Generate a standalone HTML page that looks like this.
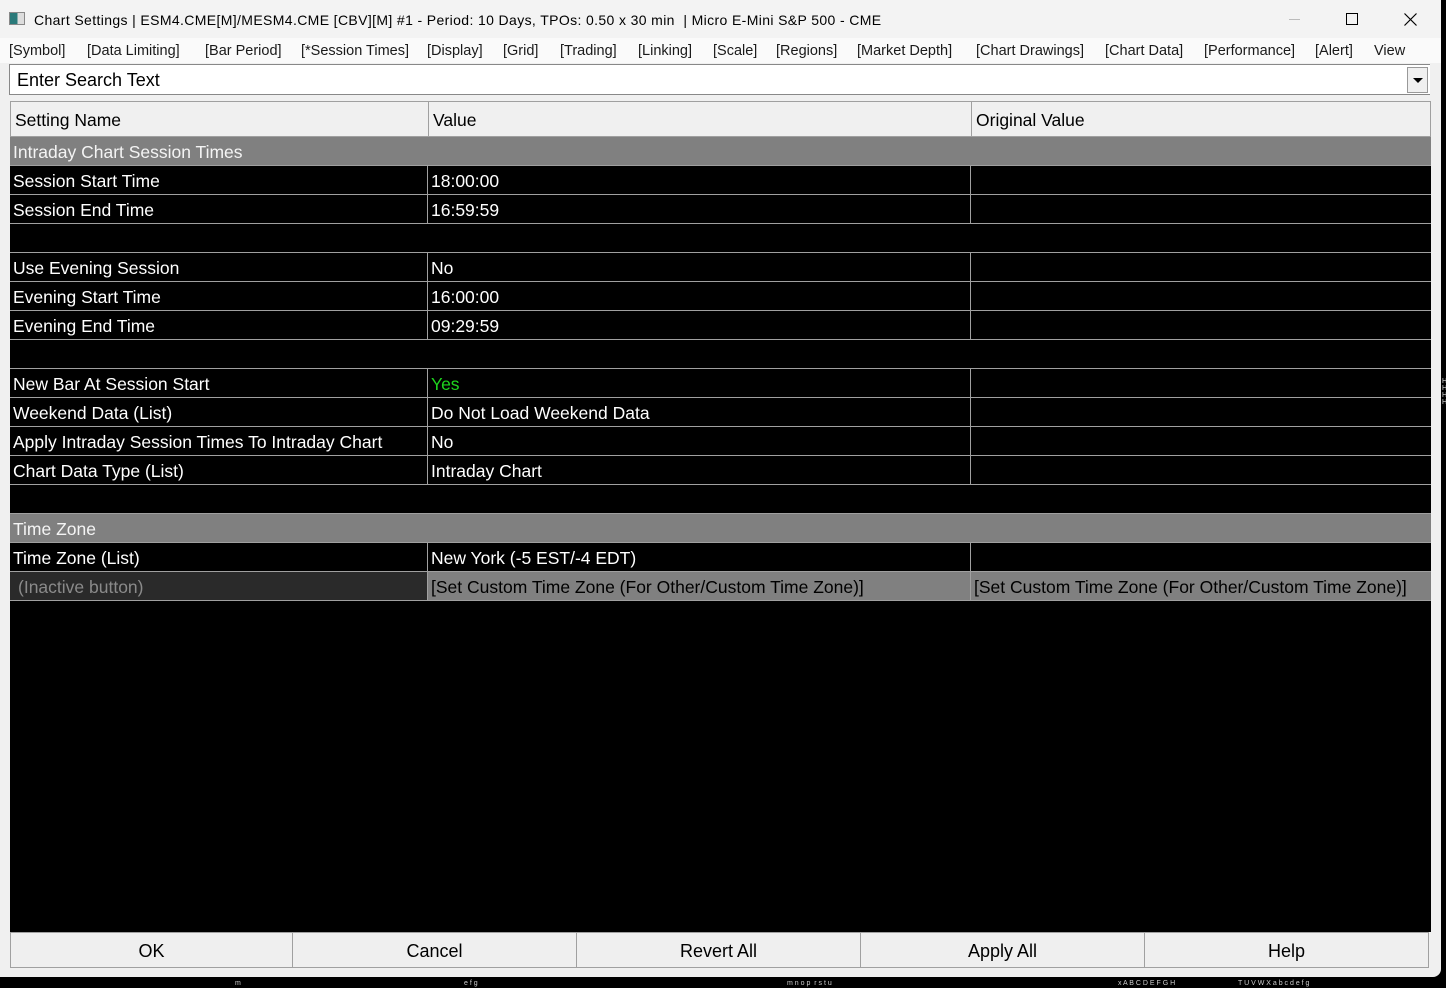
<!DOCTYPE html>
<html><head><meta charset="utf-8"><style>
*{margin:0;padding:0;box-sizing:border-box}
body{width:1446px;height:988px;background:#000;position:relative;overflow:hidden;font-family:"Liberation Sans",sans-serif}
.win{position:absolute;left:0;top:0;width:1441px;height:977px;background:#f0f0f0;border-radius:0 8px 8px 0}
.title{position:absolute;left:0;top:0;width:1441px;height:38px;background:#f3f3f3;font-size:14px;color:#000}
.menu{position:absolute;left:0;top:38px;width:1441px;height:25px;background:#fafafa;font-size:14.5px;color:#1a1a1a}
.menu span{position:absolute;top:5px;white-space:nowrap}
.search{position:absolute;left:9px;top:64px;width:1421px;height:31px;background:#fff;border:1px solid #888;border-right:none;font-size:18px;padding:5px 7px}
.dd{position:absolute;left:1407px;top:67px;width:21px;height:26px;background:#f0f0f0;border:1px solid #999}
.grid{position:absolute;left:10px;top:101px;width:1421px;height:831px;background:#000}
.r{position:absolute;left:10px;width:1421px;height:29px;font-size:17.5px;color:#fff;border-bottom:1px solid #a0a0a0}
.r div{position:absolute;top:0;height:28px;line-height:30px;padding-left:3px;white-space:nowrap}
.c1{left:0;width:417px}.c2{left:417px;width:543px;border-left:1px solid #a0a0a0}.c3{left:960px;width:461px;border-left:1px solid #a0a0a0}
.hdr{background:#f0f0f0;color:#000;height:36px;top:101px;border:1px solid #a0a0a0}
.hdr div{height:35px;line-height:36px;padding-left:4px}
.grp{background:#808080;color:#f4f4f4}
.btn{position:absolute;top:932px;height:36px;background:#efefef;border:1px solid #a0a0a0;font-size:18px;text-align:center;line-height:37px;color:#000}
</style></head><body>
<div class="win">
<div class="title">
<div style="position:absolute;left:9px;top:12px;width:16px;height:13px;border:1px solid #888;background:linear-gradient(90deg,#2a7a7a 0 55%,#ddd 55% 100%)"></div>
<div style="position:absolute;left:34px;top:12px;white-space:nowrap;letter-spacing:0.37px">Chart Settings | ESM4.CME[M]/MESM4.CME [CBV][M] #1 - Period: 10 Days, TPOs: 0.50 x 30 min &nbsp;| Micro E-Mini S&amp;P 500 - CME</div>
<div style="position:absolute;left:1289px;top:19px;width:11px;height:1px;background:#bbb"></div>
<div style="position:absolute;left:1346px;top:13px;width:12px;height:12px;border:1.3px solid #000"></div>
<svg style="position:absolute;left:1404px;top:13px" width="13" height="13"><path d="M0.5 0.5L12.5 12.5M12.5 0.5L0.5 12.5" stroke="#000" stroke-width="1.2"/></svg>
</div>
<div class="menu">
<span style="left:9px">[Symbol]</span><span style="left:87px">[Data Limiting]</span><span style="left:205px">[Bar Period]</span><span style="left:301px">[*Session Times]</span><span style="left:427px">[Display]</span><span style="left:503px">[Grid]</span><span style="left:560px">[Trading]</span><span style="left:638px">[Linking]</span><span style="left:713px">[Scale]</span><span style="left:776px">[Regions]</span><span style="left:857px">[Market Depth]</span><span style="left:976px">[Chart Drawings]</span><span style="left:1105px">[Chart Data]</span><span style="left:1204px">[Performance]</span><span style="left:1315px">[Alert]</span><span style="left:1374px">View</span>
</div>
<div class="search">Enter Search Text</div>
<div class="dd"><div style="position:absolute;left:5px;top:10px;border-left:5px solid transparent;border-right:5px solid transparent;border-top:5px solid #000"></div></div>
<div class="grid"></div>
<div class="r hdr"><div class="c1">Setting Name</div><div class="c2">Value</div><div class="c3">Original Value</div></div>
<div class="r grp" style="top:137px"><div class="c1">Intraday Chart Session Times</div></div>
<div class="r" style="top:166px"><div class="c1">Session Start Time</div><div class="c2">18:00:00</div><div class="c3"></div></div>
<div class="r" style="top:195px"><div class="c1">Session End Time</div><div class="c2">16:59:59</div><div class="c3"></div></div>
<div class="r" style="top:224px"></div>
<div class="r" style="top:253px"><div class="c1">Use Evening Session</div><div class="c2">No</div><div class="c3"></div></div>
<div class="r" style="top:282px"><div class="c1">Evening Start Time</div><div class="c2">16:00:00</div><div class="c3"></div></div>
<div class="r" style="top:311px"><div class="c1">Evening End Time</div><div class="c2">09:29:59</div><div class="c3"></div></div>
<div class="r" style="top:340px"></div>
<div class="r" style="top:369px"><div class="c1">New Bar At Session Start</div><div class="c2" style="color:#1ed41e">Yes</div><div class="c3"></div></div>
<div class="r" style="top:398px"><div class="c1">Weekend Data (List)</div><div class="c2">Do Not Load Weekend Data</div><div class="c3"></div></div>
<div class="r" style="top:427px"><div class="c1">Apply Intraday Session Times To Intraday Chart</div><div class="c2">No</div><div class="c3"></div></div>
<div class="r" style="top:456px"><div class="c1">Chart Data Type (List)</div><div class="c2">Intraday Chart</div><div class="c3"></div></div>
<div class="r" style="top:485px"></div>
<div class="r grp" style="top:514px"><div class="c1">Time Zone</div></div>
<div class="r" style="top:543px"><div class="c1">Time Zone (List)</div><div class="c2">New York (-5 EST/-4 EDT)</div><div class="c3"></div></div>
<div class="r" style="top:572px;background:#808080;color:#000"><div class="c1" style="background:#2a2a2a;color:#8a8a8a;padding-left:8px">(Inactive button)</div><div class="c2">[Set Custom Time Zone (For Other/Custom Time Zone)]</div><div class="c3">[Set Custom Time Zone (For Other/Custom Time Zone)]</div></div>
<div class="btn" style="left:10px;width:283px">OK</div>
<div class="btn" style="left:292px;width:285px">Cancel</div>
<div class="btn" style="left:576px;width:285px">Revert All</div>
<div class="btn" style="left:860px;width:285px">Apply All</div>
<div class="btn" style="left:1144px;width:285px">Help</div>
</div>
<div style="position:absolute;left:1442px;top:378px;color:#ddd;font-size:7px;line-height:7px">H<br>H<br>H<br>H</div>
<div style="position:absolute;top:980px;left:0;width:1446px;height:8px;color:#ccc;font-size:7px;line-height:8px;white-space:nowrap">
<span style="position:absolute;left:235px">m</span><span style="position:absolute;left:464px">e f g</span><span style="position:absolute;left:787px">m n o p &nbsp;r s t u</span><span style="position:absolute;left:1118px">x A B C D E F G H</span><span style="position:absolute;left:1238px">T U V W X a b c d e f g</span></div>
</body></html>
